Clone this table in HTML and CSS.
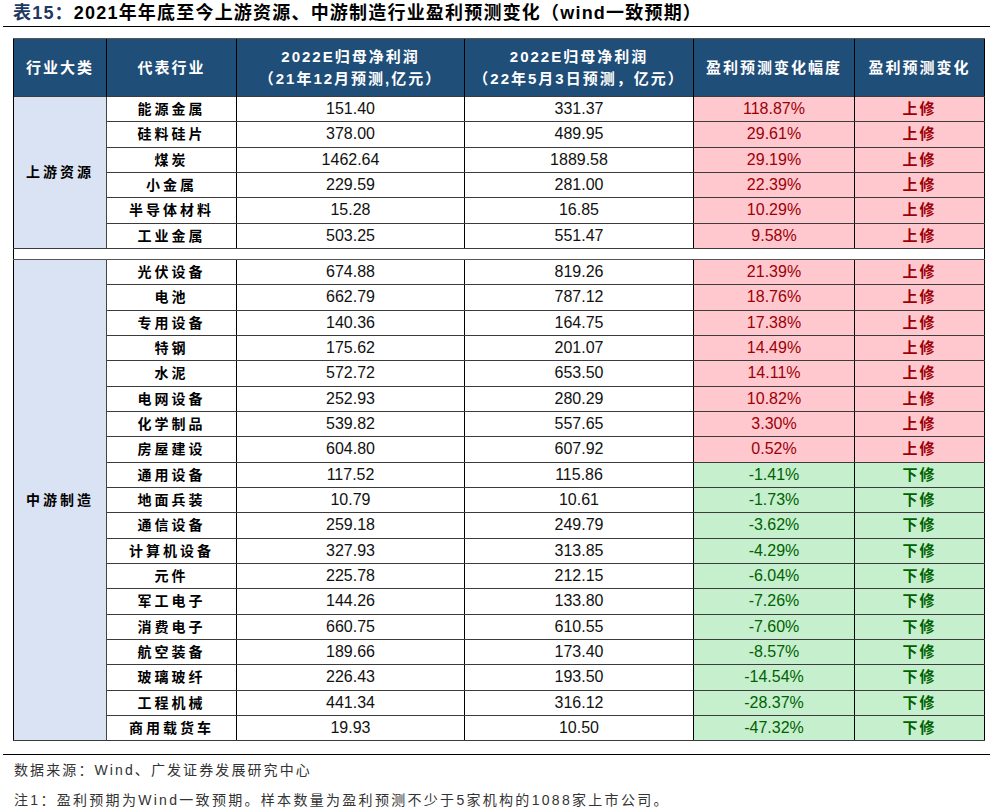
FILE: index.html
```html
<!DOCTYPE html>
<html lang="zh">
<head>
<meta charset="utf-8">
<link rel="stylesheet" href="styles.css">
</head>
<body>
<div class="page">
  <h1 class="title"><span class="tno">表15：</span>2021年年底至今上游资源、中游制造行业盈利预测变化（wind一致预期）</h1>
  <table class="tbl">
    <colgroup>
      <col class="c1"><col class="c2"><col class="c3"><col class="c4"><col class="c5"><col class="c6">
    </colgroup>
    <thead>
      <tr class="hd">
        <th>行业大类</th>
        <th>代表行业</th>
        <th>2022E归母净利润<br>（21年12月预测,亿元）</th>
        <th>2022E归母净利润<br>（22年5月3日预测，亿元）</th>
        <th>盈利预测变化幅度</th>
        <th>盈利预测变化</th>
      </tr>
    </thead>
    <tbody>
      <tr><td class="cat" rowspan="6">上游资源</td><td class="ind">能源金属</td><td class="num">151.40</td><td class="num">331.37</td><td class="up">118.87%</td><td class="upl">上修</td></tr>
      <tr><td class="ind">硅料硅片</td><td class="num">378.00</td><td class="num">489.95</td><td class="up">29.61%</td><td class="upl">上修</td></tr>
      <tr><td class="ind">煤炭</td><td class="num">1462.64</td><td class="num">1889.58</td><td class="up">29.19%</td><td class="upl">上修</td></tr>
      <tr><td class="ind">小金属</td><td class="num">229.59</td><td class="num">281.00</td><td class="up">22.39%</td><td class="upl">上修</td></tr>
      <tr><td class="ind">半导体材料</td><td class="num">15.28</td><td class="num">16.85</td><td class="up">10.29%</td><td class="upl">上修</td></tr>
      <tr><td class="ind">工业金属</td><td class="num">503.25</td><td class="num">551.47</td><td class="up">9.58%</td><td class="upl">上修</td></tr>
      <tr class="gap"><td colspan="6"></td></tr>
      <tr><td class="cat" rowspan="19">中游制造</td><td class="ind">光伏设备</td><td class="num">674.88</td><td class="num">819.26</td><td class="up">21.39%</td><td class="upl">上修</td></tr>
      <tr><td class="ind">电池</td><td class="num">662.79</td><td class="num">787.12</td><td class="up">18.76%</td><td class="upl">上修</td></tr>
      <tr><td class="ind">专用设备</td><td class="num">140.36</td><td class="num">164.75</td><td class="up">17.38%</td><td class="upl">上修</td></tr>
      <tr><td class="ind">特钢</td><td class="num">175.62</td><td class="num">201.07</td><td class="up">14.49%</td><td class="upl">上修</td></tr>
      <tr><td class="ind">水泥</td><td class="num">572.72</td><td class="num">653.50</td><td class="up">14.11%</td><td class="upl">上修</td></tr>
      <tr><td class="ind">电网设备</td><td class="num">252.93</td><td class="num">280.29</td><td class="up">10.82%</td><td class="upl">上修</td></tr>
      <tr><td class="ind">化学制品</td><td class="num">539.82</td><td class="num">557.65</td><td class="up">3.30%</td><td class="upl">上修</td></tr>
      <tr><td class="ind">房屋建设</td><td class="num">604.80</td><td class="num">607.92</td><td class="up">0.52%</td><td class="upl">上修</td></tr>
      <tr><td class="ind">通用设备</td><td class="num">117.52</td><td class="num">115.86</td><td class="dn">-1.41%</td><td class="dnl">下修</td></tr>
      <tr><td class="ind">地面兵装</td><td class="num">10.79</td><td class="num">10.61</td><td class="dn">-1.73%</td><td class="dnl">下修</td></tr>
      <tr><td class="ind">通信设备</td><td class="num">259.18</td><td class="num">249.79</td><td class="dn">-3.62%</td><td class="dnl">下修</td></tr>
      <tr><td class="ind">计算机设备</td><td class="num">327.93</td><td class="num">313.85</td><td class="dn">-4.29%</td><td class="dnl">下修</td></tr>
      <tr><td class="ind">元件</td><td class="num">225.78</td><td class="num">212.15</td><td class="dn">-6.04%</td><td class="dnl">下修</td></tr>
      <tr><td class="ind">军工电子</td><td class="num">144.26</td><td class="num">133.80</td><td class="dn">-7.26%</td><td class="dnl">下修</td></tr>
      <tr><td class="ind">消费电子</td><td class="num">660.75</td><td class="num">610.55</td><td class="dn">-7.60%</td><td class="dnl">下修</td></tr>
      <tr><td class="ind">航空装备</td><td class="num">189.66</td><td class="num">173.40</td><td class="dn">-8.57%</td><td class="dnl">下修</td></tr>
      <tr><td class="ind">玻璃玻纤</td><td class="num">226.43</td><td class="num">193.50</td><td class="dn">-14.54%</td><td class="dnl">下修</td></tr>
      <tr><td class="ind">工程机械</td><td class="num">441.34</td><td class="num">316.12</td><td class="dn">-28.37%</td><td class="dnl">下修</td></tr>
      <tr><td class="ind">商用载货车</td><td class="num">19.93</td><td class="num">10.50</td><td class="dn">-47.32%</td><td class="dnl">下修</td></tr>
    </tbody>
  </table>
  <div class="foot">
    <p class="src">数据来源：Wind、广发证券发展研究中心</p>
    <p class="note">注1：盈利预期为Wind一致预期。样本数量为盈利预测不少于5家机构的1088家上市公司。</p>
  </div>
</div>
</body>
</html>
```

FILE: styles.css
```css
* { box-sizing: border-box; }
html, body { margin: 0; padding: 0; background: #fff; }
body { font-family: "Liberation Sans", "Noto Sans CJK SC", sans-serif; color: #000; }
.page { width: 996px; padding: 0 6px 0 3px; }
.title {
  margin: 0;
  padding: 2px 0 0 10px;
  height: 27px;
  font-size: 18px;
  line-height: 22px;
  font-weight: bold;
  letter-spacing: 1.2px;
  border-bottom: 1.5px solid #000;
  white-space: nowrap;
}
.tno { color: #1f3864; }
.tbl {
  margin: 11px 0 0 10px;
  width: 971px;
  border-collapse: collapse;
  table-layout: fixed;
  border: 1px solid #000;
}
.c1 { width: 93px; }
.c2 { width: 130px; }
.c3 { width: 228px; }
.c4 { width: 229px; }
.c5 { width: 161px; }
.c6 { width: 130px; }
.hd { height: 58px; }
.hd th {
  background: #1f4e79;
  color: #fff;
  font-size: 15px;
  line-height: 22px;
  letter-spacing: 2px;
  font-weight: bold;
  border-left: 1px solid #000;
  border-top: 1px solid #555;
  padding: 0;
  text-align: center;
}
.tbl tbody tr { height: 25.33px; }
.tbl td {
  padding: 0;
  text-align: center;
  border-top: 1px solid #3c3c3c;
  border-bottom: 1px solid #3c3c3c;
  border-left: 1px solid #000;
  font-size: 16px;
  line-height: 18px;
  white-space: nowrap;
}
.tbl td.cat {
  background: #dae3f3;
  font-size: 14px;
  font-weight: bold;
  letter-spacing: 3px;
  border-right: 1.5px solid #444;
}
.tbl td.ind {
  font-size: 14px;
  font-weight: bold;
  letter-spacing: 3px;
}
.tbl td.num { color: #111; }
.tbl td.up { background: #ffc7ce; color: #9c0006; }
.tbl td.dn { background: #c6efce; color: #006100; }
.tbl td.upl { background: #ffc7ce; color: #9c0006; font-size: 15px; font-weight: bold; letter-spacing: 2px; }
.tbl td.dnl { background: #c6efce; color: #006100; font-size: 15px; font-weight: bold; letter-spacing: 2px; }
.tbl tr.gap { height: 11px; }
.tbl tr.gap td { background: #fff; border-top: 1px solid #000; border-bottom: 1.5px solid #555; }
.foot {
  margin-top: 13px;
  border-top: 1.5px solid #000;
  padding: 5px 0 0 11px;
  color: #333;
  font-size: 14px;
}
.foot p { margin: 0; line-height: 20px; white-space: nowrap; }
.foot .note { margin-top: 10px; letter-spacing: 2.3px; }
.foot .src { letter-spacing: 2.1px; }
```
